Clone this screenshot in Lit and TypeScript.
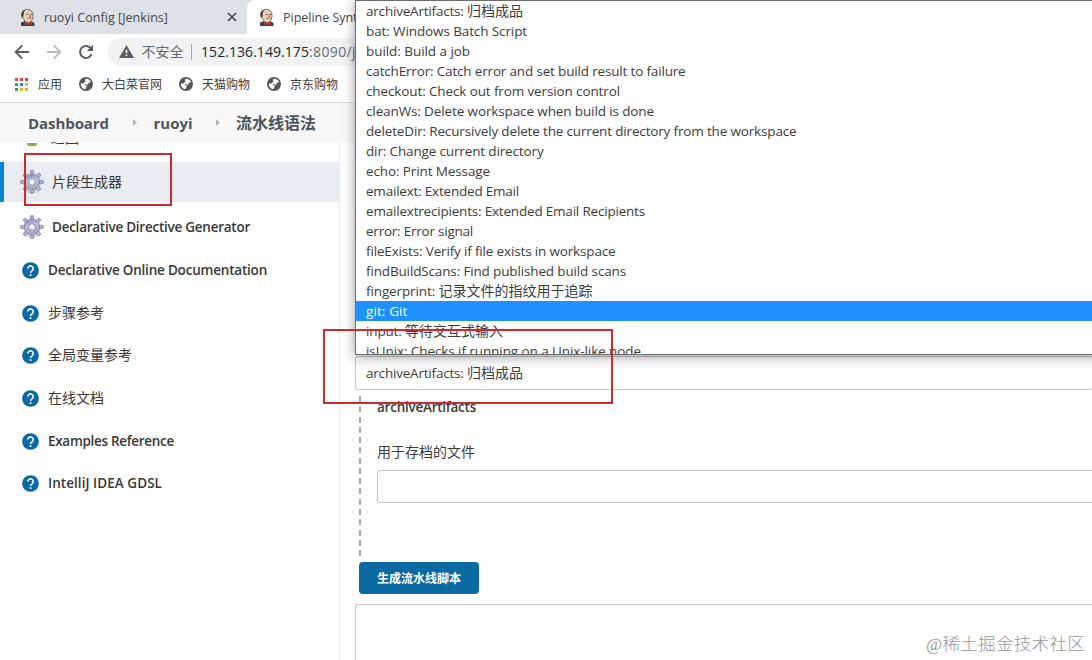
import { LitElement, html, css, svg } from "lit";
import { customElement, property } from "lit/decorators.js";

// Text label whose tracking is adjusted so that it spans the given width.
@customElement("fit-label")
class FitLabel extends LitElement {
  @property() text = "";
  @property({ type: Number }) span = 0;

  static styles = css`
    :host { display: inline-block; white-space: pre; flex: none; }
    .t { display: inline-block; }
  `;

  firstUpdated() {
    const el = this.renderRoot.querySelector(".t") as HTMLElement;
    const natural = el.getBoundingClientRect().width;
    const gap = (this.span - natural) / Math.max(1, [...this.text].length);
    if (this.span) el.style.letterSpacing = `${gap.toFixed(3)}px`;
  }

  render() {
    return html`<span class="t">${this.text}</span>`;
  }
}

// A Chinese tail after a Latin prefix keeps its own 14px character grid.
const label = (text: string, span: number) => {
  const m = /^([a-zA-Z]+: )([\u4e00-\u9fff]+)$/.exec(text);
  if (!m) return html`<fit-label .text=${text} .span=${span}></fit-label>`;
  const tail = m[2].length * 14;
  return html`<fit-label .text=${m[1]} .span=${span - tail}></fit-label><fit-label class="han" .text=${m[2]} .span=${tail}></fit-label>`;
};

const butler = html`<svg class="butler" width="16" height="17" viewBox="0 0 16 17">
  <path d="M1 17v-3.500l4-1.500 6 0 3.500 2V17z" fill="#3b4247"/>
  <path d="M1.500 6C1.500 2.300 4 .5 7.300.5c3.800 0 5.700 2.300 5.700 5.600 0 4-1.600 7.600-4.700 7.600-2 0-3.600-1.500-4.700-4C2.200 9 1.500 7.600 1.500 6z" fill="#eccfb3" stroke="#5a514b" stroke-width=".8"/>
  <path d="M1.600 6.300C1 3 3 1 5 1c-1 1.700-1 3-1.200 4.600l-.5 3C2.200 8.500 1.800 7.400 1.600 6.300z" fill="#54463e"/>
  <path d="M6.500 5.400h2M10.500 5.400h1.600M7.500 9.500c1.300-.8 2.500-.8 3.800-.1M10 6.300l.6 1.700" stroke="#55433a" stroke-width=".9" fill="none"/>
  <path d="M5 13l3 1.200 3.800-1.700.4 3.800-4-1.200-3 1.400z" fill="#c93434"/>
</svg>`;

const globe = html`<svg class="globe" width="14" height="14" viewBox="0 0 14 14">
  <circle cx="7" cy="7" r="7" fill="#54585c"/>
  <path d="M6.600 1.700C9 1.500 11 2.800 11.900 4.700c-.5 1-1.600.8-2.300 1.300-.6.500 0 1.300-.7 1.700-.8.300-1.400-.9-2.400-.8-.8 0-1.900 0-1.800-1 .1-.8 1.500-.5 1.700-1.100.2-.8-.5-1-.4-1.700.1-.6.500-.9.600-1.400z" fill="#fff"/>
  <path d="M1.800 6.600h2.800c1 0 1.200 1.500 2.200 1.700.8.200 1.200.7.800 1.500-.4.700-1.100 1.200-1 2.400C3.900 12.200 1.700 9.900 1.800 6.600z" fill="#fff"/>
</svg>`;

const teeth = [0, 45, 90, 135, 180, 225, 270, 315];
const gear = html`<svg class="gear" width="24" height="24" viewBox="0 0 24 24">
  <defs>
    <linearGradient id="g" x1="0" y1="0" x2="0.300" y2="1">
      <stop offset="0" stop-color="#7484b4"/><stop offset=".45" stop-color="#babfde"/><stop offset="1" stop-color="#a9a8be"/>
    </linearGradient>
  </defs>
  <ellipse cx="12" cy="21" rx="7" ry="2" fill="#000" opacity=".12"/>
  <g fill="url(#g)" stroke="#83839f" stroke-width=".8">
    ${teeth.map((a) => svg`<path d="M9.900 5.500L10.700.8h2.600l.8 4.700z" transform=${`rotate(${a} 12 12)`}/>`)}
    <circle cx="12" cy="12" r="7.700"/>
  </g>
  <circle cx="12" cy="12" r="7.200" fill="url(#g)"/>
  <circle cx="12" cy="12" r="3.200" fill="#f7f7fb" stroke="#9294b4" stroke-width=".9"/>
</svg>`;

const help = html`<svg class="help" width="17" height="17" viewBox="0 0 24 24">
  <circle cx="12" cy="12" r="11.800" fill="#0b6aa2"/>
  <path d="M8.200 9.300a3.800 3.800 0 1 1 6.200 2.900c-1.300 1-2.300 1.600-2.300 3.300" fill="none" stroke="#fff" stroke-width="2.200"/>
  <rect x="10.900" y="17.200" width="2.400" height="2.500" fill="#fff"/>
</svg>`;

const back = html`<svg class="nav" width="16" height="16" viewBox="0 0 16 16"><path d="M15 8H2M8.300 1.300L1.600 8l6.700 6.700" fill="none" stroke="#5a5d61" stroke-width="1.900"/></svg>`;
const forward = html`<svg class="nav" width="16" height="16" viewBox="0 0 16 16"><path d="M1 8h13M7.700 1.300L14.400 8l-6.700 6.700" fill="none" stroke="#b9bbbe" stroke-width="1.900"/></svg>`;
const reload = html`<svg class="nav" width="16" height="16" viewBox="0 0 16 16"><path d="M13.600 10.200A6 6 0 1 1 12.400 3.800L14 5.400" fill="none" stroke="#5a5d61" stroke-width="2"/><path d="M15 .8v6.200H8.800z" fill="#5a5d61"/></svg>`;
const warning = html`<svg class="warn" width="15" height="13" viewBox="0 0 15 13"><path d="M7.500 0L15 13H0z" fill="#5a5d61"/><path d="M6.700 4.800h1.600v3.500H6.700zM6.700 9.500h1.600v1.600H6.700z" fill="#fff"/></svg>`;

const appColors = ["#d5493c", "#d5493c", "#d5493c", "#3f9d5a", "#3a7fe0", "#e8b12c", "#3f9d5a", "#e8b12c", "#e8b12c"];

const bookmarks: [string, number][] = [["大白菜官网", 60], ["天猫购物", 48], ["京东购物", 48]];

const docs: [string, number][] = [
  ["Declarative Online Documentation", 219],
  ["步骤参考", 56],
  ["全局变量参考", 84],
  ["在线文档", 56],
  ["Examples Reference", 126],
  ["IntelliJ IDEA GDSL", 114],
];

const steps: [string, number][] = [
  ["archiveArtifacts: 归档成品", 157],
  ["bat: Windows Batch Script", 161],
  ["build: Build a job", 104],
  ["catchError: Catch error and set build result to failure", 319.500],
  ["checkout: Check out from version control", 254],
  ["cleanWs: Delete workspace when build is done", 288],
  ["deleteDir: Recursively delete the current directory from the workspace", 430.5],
  ["dir: Change current directory", 177.5],
  ["echo: Print Message", 124],
  ["emailext: Extended Email", 153],
  ["emailextrecipients: Extended Email Recipients", 279],
  ["error: Error signal", 107],
  ["fileExists: Verify if file exists in workspace", 249.500],
  ["findBuildScans: Find published build scans", 260],
  ["fingerprint: 记录文件的指纹用于追踪", 226.500],
  ["git: Git", 41.500],
  ["input: 等待交互式输入", 137],
  ["isUnix: Checks if running on a Unix-like node", 275],
];

@customElement("app-root")
class AppRoot extends LitElement {
  static styles = css`
    :host {
      display: flex; flex-direction: column; position: relative; overflow: hidden;
      width: 1092px; height: 660px; background: #fff; color: #3c3c3c;
      font: 13.5px/20px "Open Sans", "Noto Sans CJK SC", sans-serif;
    }
    * { box-sizing: border-box; }
    svg { display: block; flex: none; }
    .han { font-size: 14px; }

    .tabs { display: flex; height: 34px; background: #dee1e6; font-size: 12.500px; color: #43474c; }
    .tab { display: flex; align-items: center; height: 34px; }
    .tab.idle { width: 247px; padding: 0 10px 0 20px; }
    .tab fit-label { margin-left: 8px; padding-top: 2px; }
    .close { margin-left: auto; }
    .tab.current { flex: 1; padding-left: 12px; background: #fff; border-top-left-radius: 8px; }

    .toolbar { display: flex; align-items: center; height: 35px; padding-left: 14px; }
    .nav { margin-right: 16px; }
    .address { display: flex; align-items: center; flex: 1; height: 28px; margin-left: -2px; padding-left: 10.500px; border-radius: 14px; background: #f0f2f4; }
    .insecure { margin-left: 8px; font-size: 14px; color: #66696d; }
    .divider { width: 1px; height: 16px; margin: 0 9.500px 0 7px; background: #a5a8ac; }
    .address .host { font-size: 14px; color: #222529; }
    .address .rest { font-size: 14px; color: #696c70; }

    .bookmarks { display: flex; align-items: center; height: 34px; padding: 0 0 3px 15px; border-bottom: 1px solid #d9dbdd; font-size: 12px; color: #3c4043; }
    .bookmarks .name { padding-top: 2px; }
    .apps { display: grid; grid-template-columns: repeat(3, 3px); gap: 2px; margin-right: 10px; }
    .dot { width: 3px; height: 3px; }
    .globe { margin: 0 9px 0 17px; }

    .crumbs { display: flex; align-items: center; height: 39px; padding: 1px 0 1px 28px; background: #f8f8f8; color: #4d545d; font-weight: 700; font-size: 15px; z-index: 1; }
    .crumbs .last { font-size: 16px; }
    .arrow { margin: 0 16.500px 0 24px; }
    .arrow.two { margin: 0 16.500px 0 23px; }

    .main { display: flex; flex: 1; min-height: 0; }
    .side { width: 340px; border-right: 1px solid #e9eaec; overflow: hidden; }
    .sliver { display: flex; height: 20px; padding-left: 27px; overflow: hidden; }
    .green { width: 10px; height: 3px; margin-top: 1px; border-radius: 0 0 2px 2px; background: #82b541; }
    .cut { margin: -14px 0 0 14px; height: 20px; font-size: 14px; }
    .item { display: flex; align-items: center; height: 42.600px; padding-left: 21px; font-size: 13.500px; font-weight: 600; color: #383838; }
    .item .gear { margin: 0 8px 0 -1px; }
    .item .help { margin: 1px 9px 0 1px; }
    .item.active { height: 40px; padding-left: 17px; border-left: 4px solid #0b84d0; background: #e9edf1; font-weight: 400; }
    .item.second { height: 44px; margin-top: 3px; }
    .item.cjk { font-weight: 400; font-size: 14px; }

    .content { display: flex; flex-direction: column; flex: 1; padding: 214px 0 0 15px; }
    .select { flex: none; display: flex; align-items: center; height: 34px; padding-left: 10px; border: 1px solid #c6c6c6; border-right: 0; border-radius: 3px; }
    .block { flex: none; display: flex; gap: 4px; height: 160px; margin: 6px 0 0 4px; }
    .dash { width: 2px; margin-right: 12px; background: repeating-linear-gradient(to bottom, #aaa 0 6px, transparent 6px 10.270px); }
    .fields { flex: 1; padding-top: 1px; }
    .heading { display: block; font-weight: 600; height: 20px; }
    .caption { display: block; height: 20px; margin-top: 25px; font-size: 14px; }
    .input { height: 33px; margin-top: 8px; border: 1px solid #c6c6c6; border-right: 0; border-radius: 3px 0 0 3px; }
    .button { flex: none; display: flex; align-items: center; justify-content: center; width: 120px; height: 32px; margin: 6px 0 10px 4px; padding-top: 2px; border-radius: 4px; background: #0b6aa2; color: #fff; font-size: 12px; font-weight: 700; }
    .output { flex: 1; border: solid #c6c6c6; border-width: 1px 0 0 1px; border-radius: 3px 0 0 0; }

    .menu { position: absolute; z-index: 2; left: 355px; top: 0; width: 745px; height: 355px; overflow: hidden; border: 1px solid #6c6c6c; background: #fff; }
    .shade { position: absolute; z-index: 1; left: 355px; top: 0; width: 745px; height: 355px; box-shadow: 0 2px 12px rgba(0, 0, 0, .38); }
    .option { display: flex; height: 20px; padding-left: 10px; }
    .option.on { background: #1e90ff; color: #fff; }

    .mark { position: absolute; z-index: 3; border: 2px solid #d0282f; }
    .mark.a { left: 24px; top: 153px; width: 148px; height: 53px; }
    .mark.b { left: 323px; top: 329px; width: 290px; height: 75px; }
    .watermark { position: absolute; z-index: 3; right: 7px; top: 632px; line-height: 24px; font-family: "Liberation Serif", "Noto Sans CJK SC", serif; font-weight: 300; font-size: 17.600px; color: #999; }
  `;

  render() {
    return html`
      <div class="tabs">
        <div class="tab idle">${butler}${label("ruoyi Config [Jenkins]", 124)}
          <svg class="close" width="10" height="10" viewBox="0 0 10 10"><path d="M1 1l8 8M9 1L1 9" stroke="#43474c" stroke-width="1.700"/></svg>
        </div>
        <div class="tab current">${butler}${label("Pipeline Syntax", 88)}</div>
      </div>
      <div class="toolbar">
        ${back}${forward}${reload}
        <div class="address">
          ${warning}<span class="insecure">不安全</span><span class="divider"></span>
          <span class="host">${label("152.136.149.175", 108)}</span><span class="rest">${label(":8090/j", 47)}</span>
        </div>
      </div>
      <div class="bookmarks">
        <div class="apps">${appColors.map((c) => html`<i class="dot" style="background:${c}"></i>`)}</div>
        <span class="name">应用</span>
        ${bookmarks.map(([t, w]) => html`${globe}<span class="name">${label(t, w)}</span>`)}
      </div>
      <div class="crumbs">
        ${label("Dashboard", 81)}
        <svg class="arrow" width="4" height="7" viewBox="0 0 4 7"><path d="M0 0l4 3.500L0 7z" fill="#b5b7ba"/></svg>
        ${label("ruoyi", 39)}
        <svg class="arrow two" width="4" height="7" viewBox="0 0 4 7"><path d="M0 0l4 3.500L0 7z" fill="#b5b7ba"/></svg>
        <span class="last">${label("流水线语法", 80)}</span>
      </div>
      <div class="main">
        <div class="side">
          <div class="sliver"><span class="green"></span><span class="cut">返回</span></div>
          <div class="item active cjk">${gear}${label("片段生成器", 70)}</div>
          <div class="item second">${gear}${label("Declarative Directive Generator", 198)}</div>
          ${docs.map(([t, w]) => html`<div class="item ${/^[A-Z]/.test(t) ? "" : "cjk"}">${help}${label(t, w)}</div>`)}
        </div>
        <div class="content">
          <div class="select">${label("archiveArtifacts: 归档成品", 157)}</div>
          <div class="block">
            <div class="dash"></div>
            <div class="fields">
              <span class="heading">${label("archiveArtifacts", 99)}</span>
              <span class="caption">用于存档的文件</span>
              <div class="input"></div>
            </div>
          </div>
          <div class="button">${label("生成流水线脚本", 84)}</div>
          <div class="output"></div>
        </div>
      </div>
      <div class="shade"></div>
      <div class="menu">
        ${steps.map(([t, w]) => html`<div class="option ${t === "git: Git" ? "on" : ""}">${label(t, w)}</div>`)}
      </div>
      <div class="mark a"></div>
      <div class="mark b"></div>
      <div class="watermark">${label("@稀土掘金技术社区", 159)}</div>
    `;
  }
}
